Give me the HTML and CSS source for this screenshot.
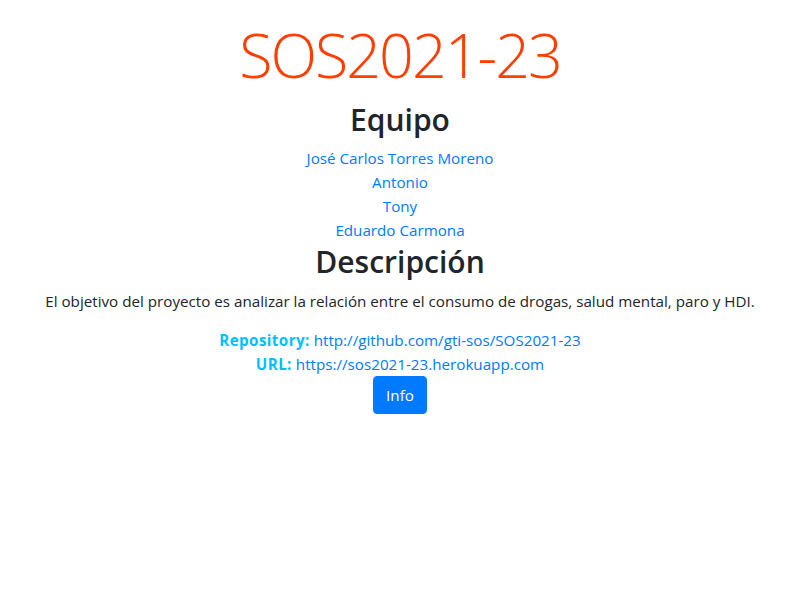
FILE: index.html
```html
<!DOCTYPE html>
<html lang="es">
<head>
<meta charset="utf-8">
<title>SOS2021-23</title>
<link rel="stylesheet" href="styles.css">
</head>
<body>
<main class="main">
  <h1 class="title">SOS2021-23</h1>
  <h2 class="heading">Equipo</h2>
  <div class="team">
    <a class="link" href="#">José Carlos Torres Moreno</a>
    <a class="link" href="#">Antonio</a>
    <a class="link" href="#">Tony</a>
    <a class="link" href="#">Eduardo Carmona</a>
  </div>
  <h2 class="heading">Descripción</h2>
  <p class="desc">El objetivo del proyecto es analizar la relación entre el consumo de drogas, salud mental, paro y HDI.</p>
  <div class="info-line"><strong class="label">Repository:</strong> <a class="link-inline" href="#">http://github.com/gti-sos/SOS2021-23</a></div>
  <div class="info-line"><strong class="label">URL:</strong> <a class="link-inline" href="#">https://sos2021-23.herokuapp.com</a></div>
  <button class="btn">Info</button>
</main>
</body>
</html>
```
FILE: styles.css
```css
* { box-sizing: border-box; }
html, body { margin: 0; padding: 0; background: #fff; }
body {
  font-family: "Open Sans", "Noto Sans", sans-serif;
  font-size: 15.2px;
  line-height: 24px;
  color: #212529;
}
.main {
  padding: 16px;
  text-align: center;
}
.title {
  margin: 0 0 6px;
  color: #ff3e00;
  font-size: 61px;
  font-weight: 300;
  line-height: 78px;
  letter-spacing: -2px;
}
.heading {
  margin: 0 0 7px;
  padding-top: 1px;
  font-size: 30px;
  font-weight: 600;
  line-height: 38.4px;
}
.team { display: flex; flex-direction: column; align-items: center; }
.link, .link-inline { color: #007bff; text-decoration: none; }
.link { display: block; line-height: 24px; }
.desc { margin: 0 0 15px; }
.info-line { line-height: 24px; }
.label { color: #00bfff; font-weight: 700; letter-spacing: 0.4px; }
.btn {
  font-family: inherit;
  font-size: 15.2px;
  line-height: 24px;
  color: #fff;
  background: #007bff;
  border: 1px solid #007bff;
  border-radius: 4px;
  padding: 6px 12px;
  height: 38px;
  cursor: pointer;
}
```
